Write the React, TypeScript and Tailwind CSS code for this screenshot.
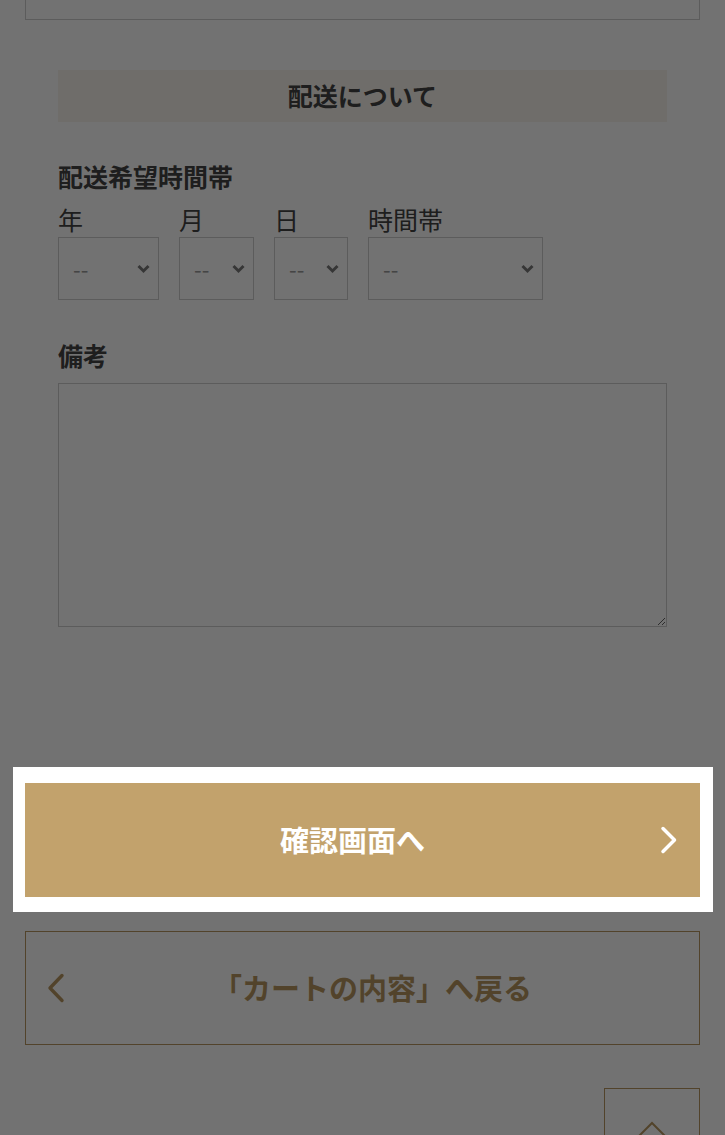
const jp = { fontFamily: '"Noto Sans CJK JP", "Noto Sans", sans-serif' }

const dateFields = [
  { label: '年', width: 'w-[101px]' },
  { label: '月', width: 'w-[75px]' },
  { label: '日', width: 'w-[74px]' },
  { label: '時間帯', width: 'w-[175px]' },
]

function SelectBox({ width }: { width: string }) {
  return (
    <div className={`relative ${width} h-[63px]`}>
      <select
        className="h-full w-full appearance-none border border-[#cfcfcf] bg-white pl-[14px] text-[22px] text-[#9a9a9a] outline-none"
        defaultValue=""
      >
        <option value="">--</option>
      </select>
      {/* select arrow */}
      <svg
        className="pointer-events-none absolute right-[9px] top-1/2 -translate-y-1/2"
        width="13"
        height="9"
        viewBox="0 0 13 9"
        fill="none"
      >
        <polyline points="1.5,1.5 6.5,6.5 11.5,1.5" stroke="#7a7a7a" strokeWidth="3" />
      </svg>
    </div>
  )
}

export default function App() {
  return (
    <div className="relative h-[1135px] overflow-hidden bg-white px-[25px]" style={jp}>
      {/* tail of the previous block */}
      <div className="h-[20px] border border-t-0 border-[#cfcfcf]" />

      {/* delivery section */}
      <section className="mt-[50px] px-[33px]">
        <h2 className="flex h-[52px] items-center justify-center bg-[#f8f4ec] text-[25px] font-bold text-[#444]">
          配送について
        </h2>

        <p className="mt-[36px] text-[25px] leading-[36px] font-bold text-[#444]">配送希望時間帯</p>
        <div className="mt-[7px] flex gap-[20px]">
          {dateFields.map((f) => (
            <div key={f.label} className="flex flex-col">
              <span className="text-[25px] leading-[36px] text-[#444]">{f.label}</span>
              <SelectBox width={f.width} />
            </div>
          ))}
        </div>

        <p className="mt-[37px] text-[25px] leading-[36px] font-bold text-[#444]">備考</p>
        <textarea className="mt-[10px] block h-[244px] w-full border border-[#cfcfcf] bg-white outline-none" />
      </section>

      {/* highlighted next button */}
      <div className="relative z-20 mt-[156px]">
        <div className="absolute -top-[16px] -right-[13px] -bottom-[15px] -left-[12px] bg-white" />
        <button className="relative flex h-[114px] w-full items-center justify-center bg-[#c2a26c] pr-[20px] text-[29px] font-bold text-white">
          確認画面へ
          <svg className="absolute right-[22px] top-1/2 -translate-y-1/2" width="18" height="28" viewBox="0 0 18 28" fill="none">
            <polyline points="3,2.5 14.5,14 3,25.5" stroke="white" strokeWidth="3.5" strokeLinecap="round" strokeLinejoin="round" />
          </svg>
        </button>
      </div>

      {/* back to cart */}
      <button className="relative mt-[34px] flex h-[114px] w-full items-center justify-center border border-[#b89760] pl-[20px] text-[29px] font-bold text-[#b89760]">
        <svg className="absolute left-[21px] top-1/2 -translate-y-1/2" width="18" height="30" viewBox="0 0 18 30" fill="none">
          <polyline points="15,2.5 3,15 15,27.5" stroke="#b89760" strokeWidth="3.4" strokeLinecap="round" strokeLinejoin="round" />
        </svg>
        「カートの内容」へ戻る
      </button>

      {/* page top */}
      <div className="mt-[43px] flex justify-end">
        <button className="flex h-[96px] w-[96px] justify-center border border-[#b89760] bg-white pt-[32px]">
          <svg width="36" height="20" viewBox="0 0 36 20" fill="none">
            <polyline points="2,18 18,2 34,18" stroke="#b89760" strokeWidth="2" />
          </svg>
        </button>
      </div>

      {/* dimming overlay */}
      <div className="absolute inset-0 z-10 bg-[rgba(0,0,0,0.553)]" />
    </div>
  )
}
